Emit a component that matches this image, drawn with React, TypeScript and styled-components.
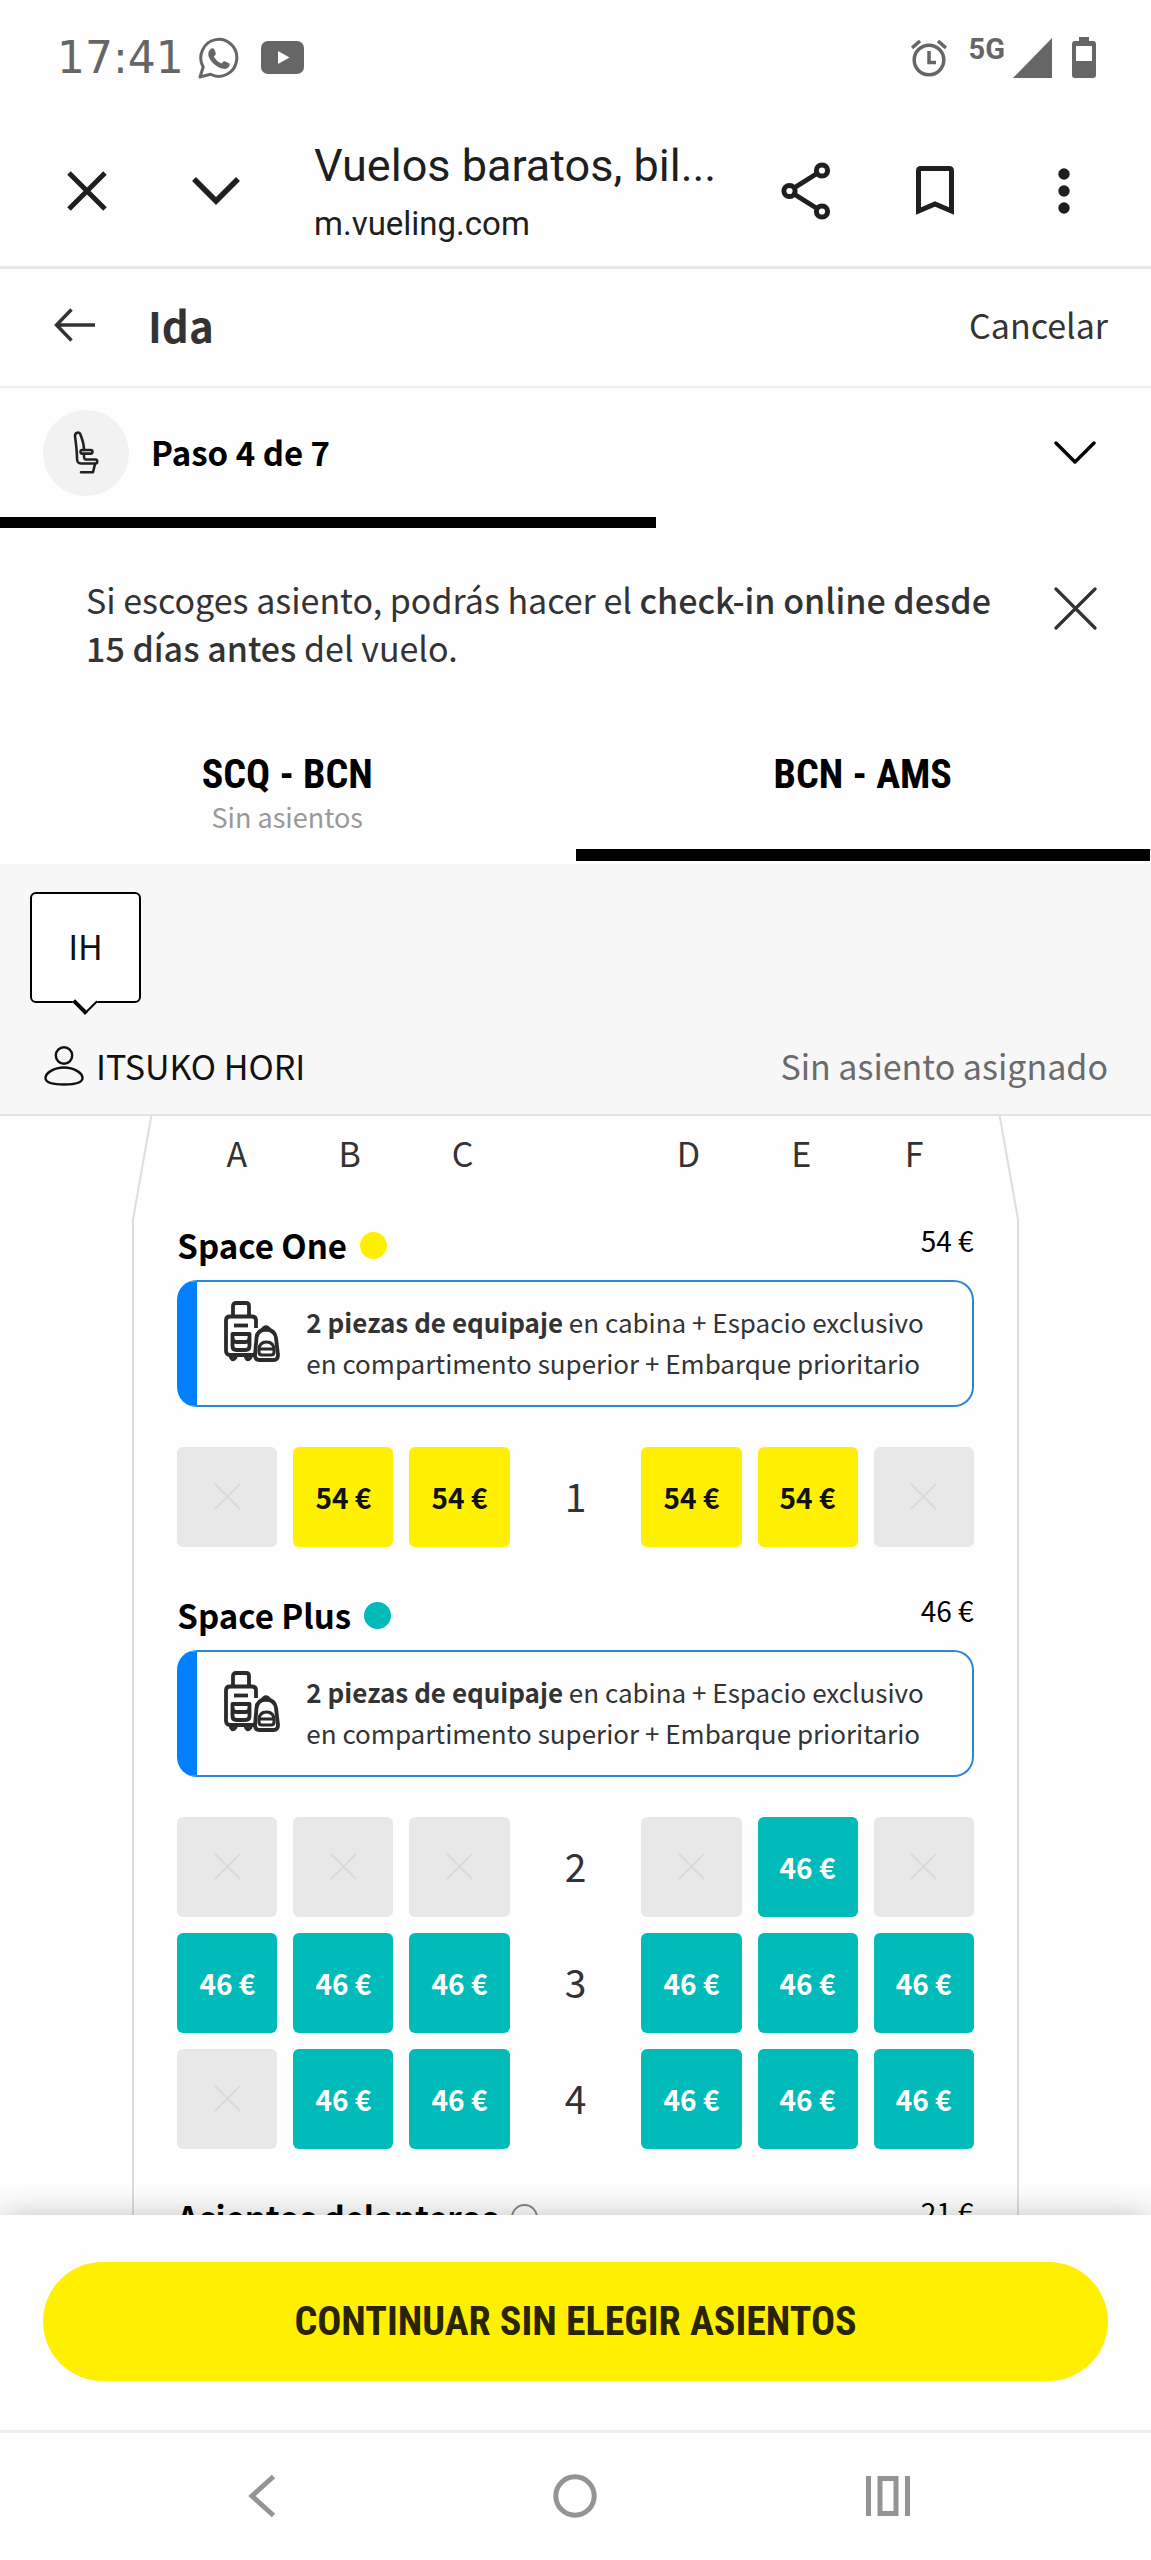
import React from "react";
import styled, { createGlobalStyle } from "styled-components";

const sans = `"Noto Sans CJK SC", "Noto Sans", sans-serif`;
const narrow = `"Roboto Condensed", "Roboto", sans-serif`;
const system = `"Roboto", "Liberation Sans", sans-serif`;

const GlobalStyle = createGlobalStyle`
  *, *::before, *::after { box-sizing: border-box; }
  body { margin: 0; background: #fefefe; font-family: ${sans}; color: #333; }
  button { font: inherit; color: inherit; background: none; border: 0; padding: 0; cursor: pointer; }
  button:disabled { cursor: default; }
  h1, h2, p { margin: 0; }
  svg { display: block; flex: none; }
`;

const Screen = styled.div`
  display: flex;
  flex-direction: column;
  height: 100vh;
  overflow: hidden;
`;

/* ---------- system status ---------- */

const StatusBar = styled.div`
  display: flex;
  align-items: center;
  justify-content: space-between;
  height: 115px;
  padding: 0 55px 0 57px;
  color: #666;
`;

const StatusGroup = styled.div`
  display: flex;
  align-items: center;
`;

const Clock = styled.span`
  margin-right: 14px;
  font: 44px/52px "DejaVu Sans", sans-serif;
`;

const Network = styled.span`
  margin: 0 8px 17px 22px;
  font: 700 29px/34px ${system};
`;

const Spaced = styled.span<{ $gap: number }>`
  margin-left: ${(p) => p.$gap}px;
`;

/* ---------- browser bar ---------- */

const BrowserBar = styled.header`
  display: flex;
  align-items: center;
  height: 154px;
  padding: 0 55px;
  border-bottom: 3px solid #e8e8e8;
  color: #1f1f1f;
`;

const IconButton = styled.button`
  display: flex;
  align-items: center;
  justify-content: center;
  width: 64px;
  height: 64px;
  flex: none;
`;

const BrowserTitle = styled.div`
  flex: 1;
  min-width: 0;
  margin: 6px 60px 0 66px;
  font-family: ${system};
`;

const PageName = styled.p`
  font-size: 45px;
  line-height: 60px;
  white-space: nowrap;
`;

const PageHost = styled.p`
  font-size: 33px;
  line-height: 56px;
`;

const BrowserActions = styled.div`
  display: flex;
  gap: 65px;
`;

/* ---------- booking header ---------- */

const TripHeader = styled.div`
  display: flex;
  align-items: center;
  height: 119px;
  padding: 0 43px 6px;
  border-bottom: 2px solid #eee;
`;

const TripTitle = styled.h1`
  flex: 1;
  margin-left: 41px;
  font-size: 42px;
  font-weight: 700;
  line-height: 60px;
`;

const CancelButton = styled.button`
  font-size: 34px;
  line-height: 48px;
`;

const StepBar = styled.button`
  display: flex;
  align-items: center;
  gap: 22px;
  height: 129px;
  padding: 0 44px 0 43px;
  color: #000;
  font-size: 33px;
  font-weight: 700;
  text-align: left;
`;

const StepIcon = styled.span`
  display: flex;
  align-items: center;
  justify-content: center;
  width: 86px;
  height: 86px;
  border-radius: 50%;
  background: #f2f2f2;
`;

const StepLabel = styled.span`
  flex: 1;
  padding-bottom: 2px;
`;

const ChevronSlot = styled.span`
  display: flex;
  justify-content: center;
  width: 64px;
`;

const Progress = styled.div`
  height: 11px;
`;

const ProgressValue = styled.div`
  height: 100%;
  background: #000;
`;

const Notice = styled.section`
  display: flex;
  align-items: flex-start;
  justify-content: space-between;
  gap: 32px;
  padding: 48px 44px 0 86px;
`;

const NoticeText = styled.p`
  font-size: 34px;
  line-height: 48px;
  strong { font-weight: 500; }
`;

/* ---------- flight tabs ---------- */

const Tabs = styled.div`
  display: grid;
  grid-template-columns: 1fr 1fr;
  height: 192px;
`;

const Tab = styled.button<{ $active?: boolean }>`
  display: flex;
  flex-direction: column;
  align-items: center;
  margin: 0 1px 3px 0;
  padding-top: 79px;
  border-bottom: 12px solid ${(p) => (p.$active ? "#000" : "transparent")};
`;

const Route = styled.span`
  color: #000;
  font-family: ${narrow};
  font-size: 40px;
  font-weight: 700;
  line-height: 48px;
`;

const RouteNote = styled.span`
  color: #999;
  font-size: 27px;
  line-height: 36px;
`;

/* ---------- passenger ---------- */

const Passenger = styled.section`
  height: 252px;
  padding: 28px 43px 0 30px;
  border-bottom: 2px solid #e3e3e3;
  background: #f7f7f7;
  color: #111;
  font-size: 34px;
  line-height: 48px;
`;

const PassengerBadge = styled.button`
  position: relative;
  display: flex;
  align-items: center;
  justify-content: center;
  width: 111px;
  height: 111px;
  padding-bottom: 4px;
  border: 2px solid #000;
  border-radius: 6px;
  background: #fff;

  &::after {
    content: "";
    position: absolute;
    left: 44px;
    bottom: -10px;
    width: 18px;
    height: 18px;
    border: solid #000;
    border-width: 0 2px 4px 0;
    background: #fff;
    transform: rotate(45deg);
  }
`;

const PassengerRow = styled.div`
  display: flex;
  align-items: center;
  gap: 12px;
  margin: 39px 0 0 14px;
`;

const PassengerName = styled.span`
  flex: 1;
`;

const SeatStatus = styled.span`
  color: #6b6b6b;
`;

/* ---------- seat map ---------- */

const MapViewport = styled.main`
  flex: 1;
  min-height: 0;
  overflow: hidden;
`;

const Fuselage = styled.div`
  width: 77%;
  margin: 0 auto;
`;

const Nose = styled.div`
  position: relative;
  height: 105px;
  padding: 17px 48px 0;

  &::before,
  &::after {
    content: "";
    position: absolute;
    top: 0;
    bottom: 0;
    width: 2px;
    background: #ddd;
  }
  &::before { left: 9px; transform: skewX(-10deg); }
  &::after { right: 9px; transform: skewX(10deg); }
`;

const ColumnLetters = styled.div`
  display: grid;
  grid-template-columns: repeat(7, 1fr);
  font-size: 34px;
  line-height: 40px;
  text-align: center;
`;

const Cabin = styled.div`
  padding: 0 43px;
  border: solid #ddd;
  border-width: 0 2px;
`;

const Zone = styled.section`
  padding-bottom: 44px;
`;

const ZoneHeader = styled.div`
  display: flex;
  align-items: center;
  height: 48px;
  color: #000;
`;

const ZoneName = styled.h2`
  font-size: 33px;
  font-weight: 700;
  line-height: 48px;
`;

const ZoneDot = styled.span<{ $color: string; $outline?: boolean }>`
  width: 27px;
  height: 27px;
  margin-left: 13px;
  border: 2px solid ${(p) => (p.$outline ? "#888" : p.$color)};
  border-radius: 50%;
  background: ${(p) => p.$color};
`;

const ZonePrice = styled.span`
  margin: 0 0 11px auto;
  font-size: 28px;
  line-height: 40px;
`;

const Benefits = styled.div`
  display: flex;
  align-items: flex-start;
  gap: 26px;
  margin: 11px 0 40px;
  padding: 19px 30px 22px 27px;
  border: 2px solid #2e86d8;
  border-left: 20px solid #0080ff;
  border-radius: 20px;
`;

const BenefitsText = styled.p`
  font-size: 26px;
  line-height: 41px;
  strong { font-weight: 700; }
`;

const SeatGrid = styled.div`
  display: grid;
  grid-template-columns: repeat(7, 1fr);
  gap: 16px;
`;

const Seat = styled.button<{ $bg: string; $fg: string }>`
  display: flex;
  align-items: center;
  justify-content: center;
  aspect-ratio: 1;
  padding-bottom: 1px;
  border-radius: 6px;
  background: ${(p) => p.$bg};
  color: ${(p) => p.$fg};
  font-size: 28px;
  font-weight: 700;
  white-space: nowrap;
`;

const RowNumber = styled.span`
  align-self: center;
  padding-bottom: 4px;
  font-size: 39px;
  line-height: 48px;
  text-align: center;
`;

/* ---------- footer ---------- */

const Footer = styled.footer`
  position: relative;
  height: 218px;
  padding: 47px 43px;
  border-bottom: 3px solid #eee;
  background: #fefefe;
  box-shadow: 0 0 30px rgba(0, 0, 0, 0.24);
`;

const ContinueButton = styled.button`
  width: 100%;
  height: 119px;
  border-radius: 60px;
  background: #fff000;
  color: #2a2500;
  font-family: ${narrow};
  font-size: 40px;
  font-weight: 700;
`;

const SystemNav = styled.nav`
  position: relative;
  display: flex;
  align-items: center;
  justify-content: space-between;
  height: 127px;
  padding: 0 231px 2px 230px;
  background: #fefefe;
  color: #949494;
`;

/* ---------- icons ---------- */

const WhatsAppIcon = () => (
  <svg width="41" height="42" viewBox="0 0 41 42" fill="none">
    <path d="M2 40l3.200-10A18 18.500 0 1 1 12.500 37.200z" stroke="currentColor" strokeWidth="3" strokeLinejoin="round" />
    <path d="M12.500 12.200c1.800-1.600 3.400-.9 4 .6l1.300 3.500c.3 1-.9 2.300-1.900 3.300 1.700 3.300 4.200 5.500 7.700 6.900 1-1.300 2-2.700 3.300-2.200l4 2c1.500.8.6 3.300-.9 4.400-3 2.300-7.500 1-11.800-1.900-4.400-3.100-7.800-8-7.900-11.600 0-2.300.9-3.900 2.200-5z" fill="currentColor" />
  </svg>
);

const YouTubeIcon = () => (
  <svg width="43" height="33" viewBox="0 0 43 33">
    <rect width="43" height="33" rx="7" fill="currentColor" />
    <path d="M17 10v13l11.500-6.500z" fill="#fff" />
  </svg>
);

const AlarmIcon = () => (
  <svg width="36" height="38" viewBox="0 0 36 38" fill="none" stroke="currentColor" strokeWidth="3.500">
    <circle cx="18" cy="21" r="14.800" />
    <path d="M18 12v11.500h7M1 9l8-7M35 9l-8-7" />
  </svg>
);

const SignalIcon = () => (
  <svg width="39" height="40" viewBox="0 0 39 40">
    <path d="M39 0v40H0z" fill="currentColor" />
  </svg>
);

const BatteryIcon = () => (
  <svg width="24" height="41" viewBox="0 0 24 41">
    <path d="M7 0h10v4h4a3 3 0 0 1 3 3v31a3 3 0 0 1-3 3H3a3 3 0 0 1-3-3V7a3 3 0 0 1 3-3h4z" fill="currentColor" />
    <path d="M4 9h16v15H4z" fill="#fff" />
  </svg>
);

const CrossIcon = ({ size, stroke, round }: { size: number; stroke: number; round?: boolean }) => (
  <svg width={size} height={size} viewBox={`0 0 ${size} ${size}`} stroke="currentColor" strokeWidth={stroke} strokeLinecap={round ? "round" : "butt"}>
    <path d={`M2 2L${size - 2} ${size - 2}M${size - 2} 2L2 ${size - 2}`} />
  </svg>
);

const BoldChevronIcon = () => (
  <svg width="50" height="30" viewBox="0 0 50 30" fill="none" stroke="currentColor" strokeWidth="5.500">
    <path d="M3 3l22 22L47 3" />
  </svg>
);

const ChevronIcon = () => (
  <svg width="42" height="24" viewBox="0 0 42 24" fill="none" stroke="#000" strokeWidth="3.400" strokeLinecap="round" strokeLinejoin="round">
    <path d="M2 2l19 19L40 2" />
  </svg>
);

const ShareIcon = () => (
  <svg width="50" height="58" viewBox="0 0 50 58" fill="none" stroke="currentColor" strokeWidth="5">
    <circle cx="41" cy="8.500" r="5.600" />
    <circle cx="8.500" cy="29" r="5.600" />
    <circle cx="41" cy="49.500" r="5.600" />
    <path d="M13 26l23-14.500M13 32l23 14.500" />
  </svg>
);

const BookmarkIcon = () => (
  <svg width="40" height="51" viewBox="0 0 40 51" fill="none" stroke="currentColor" strokeWidth="5">
    <path d="M3.500 46V6Q3.500 3.500 6 3.500h28Q36.500 3.500 36.500 6v40L20 39z" />
  </svg>
);

const DotsIcon = () => (
  <svg width="12" height="46" viewBox="0 0 12 46" fill="currentColor">
    <circle cx="6" cy="6" r="5.700" />
    <circle cx="6" cy="23" r="5.700" />
    <circle cx="6" cy="40" r="5.700" />
  </svg>
);

const BackArrowIcon = () => (
  <svg width="42" height="34" viewBox="0 0 42 34" fill="none" stroke="currentColor" strokeWidth="3.400">
    <path d="M17.500 1.500L2.500 17l15 15.500M2.500 17H41" />
  </svg>
);

const SeatIcon = () => (
  <svg width="26" height="43" viewBox="0 0 26 43" fill="none" stroke="#222" strokeWidth="2.600" strokeLinejoin="round" strokeLinecap="round">
    <path d="M2 5C2 1 6 1 7 2.500c3 7 4 10 4 16.500M2 5c1 8 2 15 2 22 0 4 1 5.500 4 5.500h14.500c2.300 0 2.300-4 0-4H13c-2 0-2-1.500-2-4" />
    <rect x="7.500" y="19" width="12" height="3.600" rx="1.800" />
    <path d="M22 33l-2 8.300H8" />
  </svg>
);

const PersonIcon = () => (
  <svg width="40" height="40" viewBox="0 0 40 40" fill="none" stroke="#111" strokeWidth="2.400">
    <circle cx="20" cy="9.500" r="8.200" />
    <path d="M20 21.500c10 0 18.500 5.500 18.500 10.500S30 38.500 20 38.500 1.500 37 1.500 32 10 21.500 20 21.500z" />
  </svg>
);

const LuggageIcon = () => (
  <svg width="56" height="61" viewBox="0 0 56 61" fill="none" stroke="#2b2b2b" strokeWidth="3.800" strokeLinejoin="round">
    <path d="M9 15V5Q9 2 12 2h10Q25 2 25 5V15" />
    <path d="M30 54H6Q2 54 2 50V19.500q0-4 4-4h22q4 0 4 4V27" />
    <path d="M10 24.500h14" />
    <path d="M8.500 33h17v12q0 4-4 4h-9q-4 0-4-4zM8.500 36q0 5 4 5h9q4 0 4-5" />
    <path d="M7 54.500v2q2 3.500 4.500 0v-2M22 54.500v2q2 3.500 4.500 0v-2" />
    <path d="M31 54l1.500-17q.5-8 9.500-8.500 9 .5 10 8.500l2 17q0 5-4.500 5h-14Q31 59 31 54z" />
    <path d="M36.500 29.500q5.500-9 11 0z" fill="#2b2b2b" strokeWidth="1.500" />
    <path d="M35 49q0-8 7.500-8t7.500 8v2q0 3-3 3h-9q-3 0-3-3zM35 48h15" strokeWidth="3" />
  </svg>
);

const TakenIcon = () => (
  <svg width="27" height="27" viewBox="0 0 27 27" stroke="#dadada" strokeWidth="2">
    <path d="M1 1l25 25M26 1L1 26" />
  </svg>
);

const NavBackIcon = () => (
  <svg width="28" height="44" viewBox="0 0 28 44" fill="none" stroke="currentColor" strokeWidth="5">
    <path d="M25.500 2.500L4 22l21.500 19.500" />
  </svg>
);

const NavHomeIcon = () => (
  <svg width="44" height="44" viewBox="0 0 44 44" fill="none" stroke="currentColor" strokeWidth="5">
    <circle cx="22" cy="22" r="19.200" />
  </svg>
);

const NavRecentsIcon = () => (
  <svg width="44" height="40" viewBox="0 0 44 40" fill="none" stroke="currentColor" strokeWidth="5">
    <path d="M2.500 0v40M41.500 0v40" />
    <path d="M14 2.500h16v35H14z" />
  </svg>
);

/* ---------- data ---------- */

type CabinData = { name: string; price: string; color: string; text: string; rows: { number: number; free: string }[] };

const cabins: CabinData[] = [
  { name: "Space One", price: "54 €", color: "#fff000", text: "#111", rows: [{ number: 1, free: "BCDE" }] },
  {
    name: "Space Plus",
    price: "46 €",
    color: "#00bbba",
    text: "#fff",
    rows: [
      { number: 2, free: "E" },
      { number: 3, free: "ABCDEF" },
      { number: 4, free: "BCDEF" },
    ],
  },
];

const columns = ["A", "B", "C", "", "D", "E", "F"];

const step = 4;
const steps = 7;

function SeatRow({ cabin, row }: { cabin: CabinData; row: CabinData["rows"][number] }) {
  return (
    <>
      {columns.map((col) => {
        if (!col) return <RowNumber key="aisle">{row.number}</RowNumber>;
        const free = row.free.includes(col);
        return (
          <Seat
            key={col}
            type="button"
            disabled={!free}
            aria-label={free ? undefined : `${row.number}${col}`}
            $bg={free ? cabin.color : "#e8e8e8"}
            $fg={cabin.text}
          >
            {free ? cabin.price : <TakenIcon />}
          </Seat>
        );
      })}
    </>
  );
}

function CabinZone({ cabin }: { cabin: CabinData }) {
  return (
    <Zone>
      <ZoneHeader>
        <ZoneName>{cabin.name}</ZoneName>
        <ZoneDot $color={cabin.color} />
        <ZonePrice>{cabin.price}</ZonePrice>
      </ZoneHeader>
      <Benefits>
        <LuggageIcon />
        <BenefitsText>
          <strong>2 piezas de equipaje</strong> en cabina + Espacio exclusivo en compartimento superior + Embarque
          prioritario
        </BenefitsText>
      </Benefits>
      <SeatGrid>
        {cabin.rows.map((row) => (
          <SeatRow key={row.number} cabin={cabin} row={row} />
        ))}
      </SeatGrid>
    </Zone>
  );
}

export default function App() {
  return (
    <Screen>
      <GlobalStyle />
      <StatusBar>
        <StatusGroup>
          <Clock>17:41</Clock>
          <WhatsAppIcon />
          <Spaced $gap={22}><YouTubeIcon /></Spaced>
        </StatusGroup>
        <StatusGroup>
          <AlarmIcon />
          <Network>5G</Network>
          <SignalIcon />
          <Spaced $gap={20}><BatteryIcon /></Spaced>
        </StatusGroup>
      </StatusBar>

      <BrowserBar>
        <BrowserActions>
          <IconButton type="button" aria-label="Cerrar"><CrossIcon size={40} stroke={5} /></IconButton>
          <IconButton type="button" aria-label="Minimizar"><BoldChevronIcon /></IconButton>
        </BrowserActions>
        <BrowserTitle>
          <PageName>Vuelos baratos, bil...</PageName>
          <PageHost>m.vueling.com</PageHost>
        </BrowserTitle>
        <BrowserActions>
          <IconButton type="button" aria-label="Compartir"><ShareIcon /></IconButton>
          <IconButton type="button" aria-label="Guardar"><BookmarkIcon /></IconButton>
          <IconButton type="button" aria-label="Más opciones"><DotsIcon /></IconButton>
        </BrowserActions>
      </BrowserBar>

      <TripHeader>
        <IconButton type="button" aria-label="Volver"><BackArrowIcon /></IconButton>
        <TripTitle>Ida</TripTitle>
        <CancelButton type="button">Cancelar</CancelButton>
      </TripHeader>

      <StepBar type="button">
        <StepIcon><SeatIcon /></StepIcon>
        <StepLabel>Paso {step} de {steps}</StepLabel>
        <ChevronSlot><ChevronIcon /></ChevronSlot>
      </StepBar>
      <Progress>
        <ProgressValue style={{ width: `${Math.floor((step / steps) * 100)}%` }} />
      </Progress>

      <Notice>
        <NoticeText>
          Si escoges asiento, podrás hacer el <strong>check-in online desde 15 días antes</strong> del vuelo.
        </NoticeText>
        <IconButton type="button" aria-label="Cerrar aviso"><CrossIcon size={43} stroke={3.2} round /></IconButton>
      </Notice>

      <Tabs role="tablist">
        <Tab type="button" role="tab" aria-selected={false}>
          <Route>SCQ - BCN</Route>
          <RouteNote>Sin asientos</RouteNote>
        </Tab>
        <Tab type="button" role="tab" aria-selected $active>
          <Route>BCN - AMS</Route>
        </Tab>
      </Tabs>

      <Passenger>
        <PassengerBadge type="button">IH</PassengerBadge>
        <PassengerRow>
          <PersonIcon />
          <PassengerName>ITSUKO HORI</PassengerName>
          <SeatStatus>Sin asiento asignado</SeatStatus>
        </PassengerRow>
      </Passenger>

      <MapViewport>
        <Fuselage>
          <Nose>
            <ColumnLetters>
              {columns.map((col) => <span key={col || "aisle"}>{col}</span>)}
            </ColumnLetters>
          </Nose>
          <Cabin>
            {cabins.map((cabin) => <CabinZone key={cabin.name} cabin={cabin} />)}
            <Zone>
              <ZoneHeader>
                <ZoneName>Asientos delanteros</ZoneName>
                <ZoneDot $color="#fff" $outline />
                <ZonePrice>21 €</ZonePrice>
              </ZoneHeader>
            </Zone>
          </Cabin>
        </Fuselage>
      </MapViewport>

      <Footer>
        <ContinueButton type="button">CONTINUAR SIN ELEGIR ASIENTOS</ContinueButton>
      </Footer>

      <SystemNav>
        <IconButton type="button" aria-label="Atrás"><NavBackIcon /></IconButton>
        <IconButton type="button" aria-label="Inicio"><NavHomeIcon /></IconButton>
        <IconButton type="button" aria-label="Recientes"><NavRecentsIcon /></IconButton>
      </SystemNav>
    </Screen>
  );
}
